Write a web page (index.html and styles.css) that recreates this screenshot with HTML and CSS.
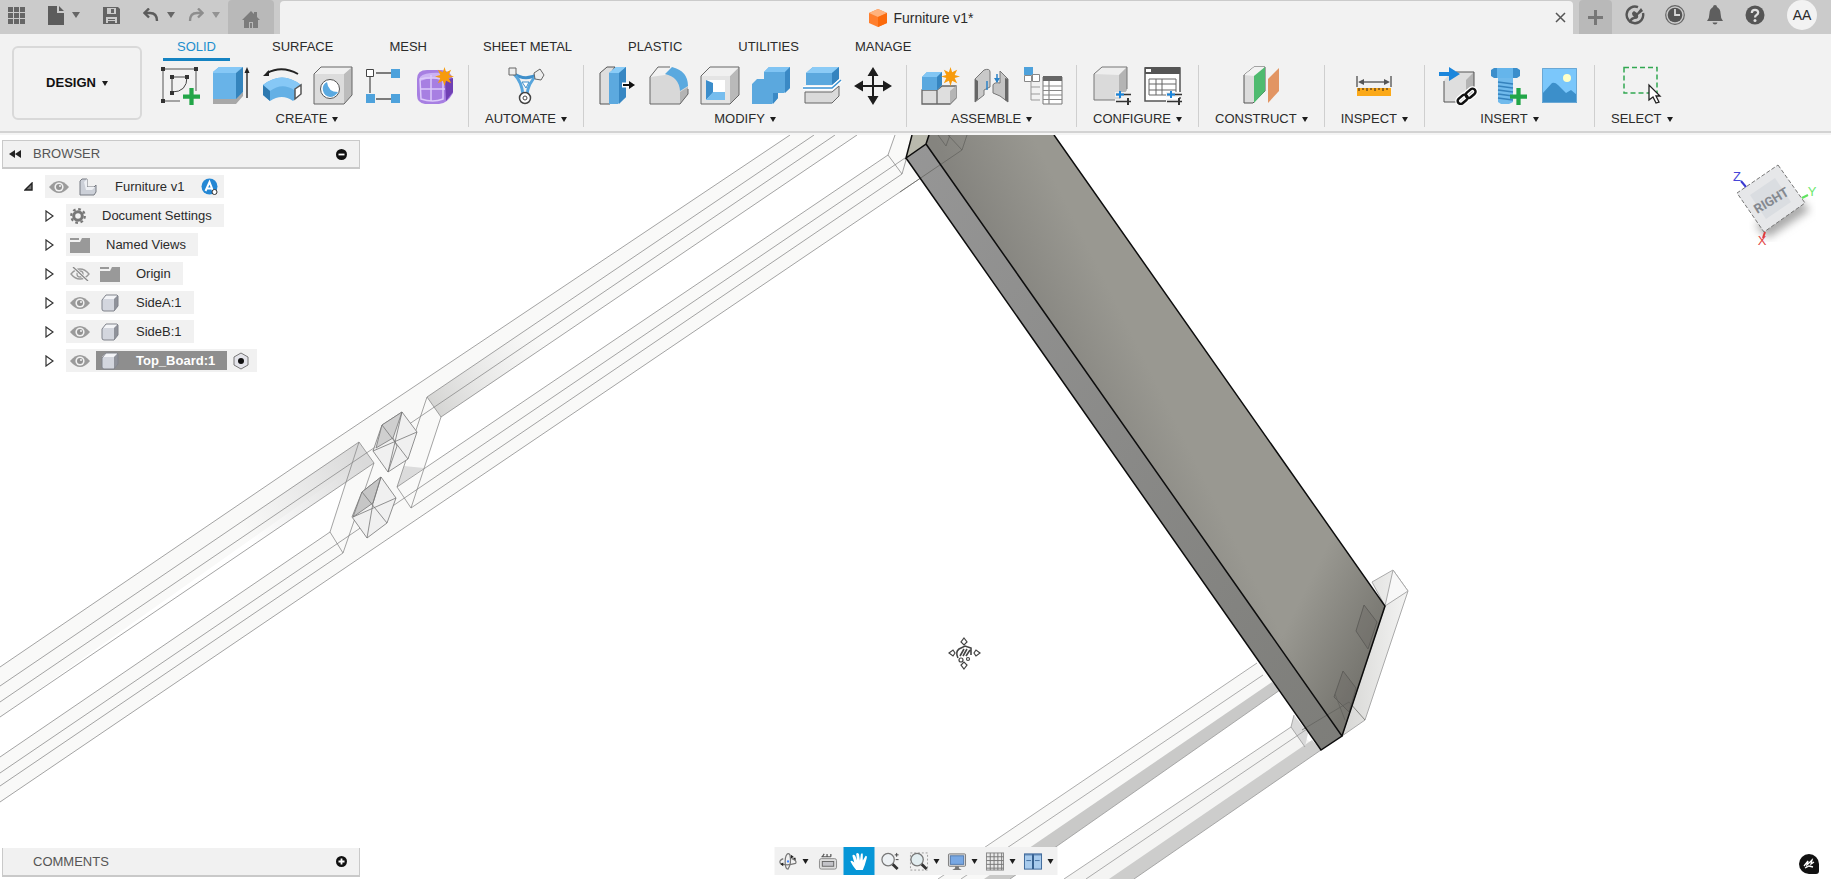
FILE: index.html
```
<!DOCTYPE html>
<html lang="en">
<head>
    <meta charset="UTF-8">
    <meta name="viewport" content="width=device-width, initial-scale=1.0">
    <link rel="stylesheet" href="styles.css">
    <title>Furniture v1*</title>
</head>
<body>

    <!-- Shared symbols -->
    <svg class="symbols" aria-hidden="true">
        <symbol id="eye" viewBox="0 0 20 14">
            <path d="M0 7 Q5 1 10 1 Q15 1 20 7 Q15 13 10 13 Q5 13 0 7Z" fill="#9b9b9b"/>
            <circle cx="10" cy="7" r="4.6" fill="#f1f1f1"/>
            <circle cx="10" cy="7" r="3" fill="#929292"/>
            <circle cx="11" cy="6" r="1" fill="#f1f1f1"/>
        </symbol>
        <symbol id="eye-off" viewBox="0 0 20 14">
            <path d="M1 7 Q5 2 10 2 Q15 2 19 7 Q15 12 10 12 Q5 12 1 7Z" fill="none" stroke="#999" stroke-width="1.3"/>
            <circle cx="10" cy="7" r="3" fill="none" stroke="#999" stroke-width="1.3"/>
            <path d="M3 0 L18 14" stroke="#f1f1f1" stroke-width="3"/>
            <path d="M3 0 L18 14" stroke="#888" stroke-width="1.3"/>
        </symbol>
        <symbol id="folder" viewBox="0 0 20 16">
            <path d="M0 1H9V3H0Z M0 5H10L12 1H20V16H0Z" fill="#999"/>
        </symbol>
        <symbol id="body" viewBox="0 0 18 18">
            <path d="M1 6 Q1 5 5 1 H16 Q17 1 17 3 V12 L13 17 H3 Q1 17 1 15Z" fill="#d3d6de"/>
            <path d="M1 5 L5 1 H17 L13 5Z" fill="#f3f4f7"/>
            <path d="M13 5 L17 1 V12 L13 17Z" fill="#8f929a"/>
            <path d="M1 6 L5 1 H16 L17 2 V12 L13 17 H3 Q1 17 1 15Z" fill="none" stroke="#80838b"/>
        </symbol>
        <symbol id="closed" viewBox="0 0 9 12">
            <path d="M1 1 L8 6 L1 11Z" fill="#fff" stroke="#333" stroke-width="1.2"/>
        </symbol>
        <symbol id="star" viewBox="0 0 20 20">
            <path d="M10 0 L11.7 5.6 L17 3 L14.4 8.3 L20 10 L14.4 11.7 L17 17 L11.7 14.4 L10 20 L8.3 14.4 L3 17 L5.6 11.7 L0 10 L5.6 8.3 L3 3 L8.3 5.6Z" fill="#f79b0c"/>
        </symbol>
        <symbol id="plus" viewBox="0 0 16 16">
            <path d="M6 0H10V6H16V10H10V16H6V10H0V6H6Z" fill="#22a648"/>
        </symbol>
    </svg>

    <header class="titlebar">
        <div class="quick">
            <button aria-label="Data panel"><svg width="17" height="17" viewBox="0 0 17 17"><path d="M0 0h5v5H0zM6 0h5v5H6zM12 0h5v5h-5zM0 6h5v5H0zM6 6h5v5H6zM12 6h5v5h-5zM0 12h5v5H0zM6 12h5v5H6zM12 12h5v5h-5z" fill="#666"/></svg></button>
            <button class="has-caret" aria-label="File"><svg width="16" height="19" viewBox="0 0 16 19"><path d="M0 0H9V7H16V19H0Z M11 0L16 5H11Z" fill="#5c5c5c"/></svg><i class="caret big"></i></button>
            <button aria-label="Save"><svg width="17" height="17" viewBox="0 0 17 17"><path d="M0 0H15L17 2V17H0Z" fill="#636363"/><path d="M4 1H13V7H4Z M3 10H14V16H3Z" fill="#cbcbcb"/><path d="M8 2H11V6H8Z M5 12H12V13H5Z M5 14H12V17H5Z" fill="#636363"/></svg></button>
            <button class="has-caret" aria-label="Undo"><svg width="16" height="14" viewBox="0 0 16 14"><path d="M2 5H7Q14 5 14 13" fill="none" stroke="#5c5c5c" stroke-width="2.4"/><path d="M6 0.5L1.5 5L6 9.5" fill="none" stroke="#5c5c5c" stroke-width="2.4"/></svg><i class="caret big"></i></button>
            <button class="has-caret faded" aria-label="Redo"><svg width="16" height="14" viewBox="0 0 16 14"><path d="M14 5H9Q2 5 2 13" fill="none" stroke="#5c5c5c" stroke-width="2.4"/><path d="M10 0.5L14.500 5L10 9.5" fill="none" stroke="#5c5c5c" stroke-width="2.4"/></svg><i class="caret big"></i></button>
        </div>
        <button class="home" aria-label="Home"><svg width="18" height="17" viewBox="0 0 18 17"><path d="M9 0L12 3V1H15V6L18 9H16V17H11V11H7V17H2V9H0Z" fill="#7c7c7c"/><path d="M8 12H10V17H8Z" fill="#7c7c7c"/></svg></button>
        <div class="doc">
            <div class="doc__name">
                <svg width="18" height="20" viewBox="0 0 18 20"><path d="M9 1L18 5V15L9 19L0 15V5Z" fill="#ff7f2e"/><path d="M9 1L18 5L9 9L0 5Z" fill="#ffb27d"/><path d="M9 9L18 5V15L9 19Z" fill="#fb6a0c"/></svg>
                <span>Furniture v1*</span>
            </div>
            <button aria-label="Close"><svg width="11" height="11" viewBox="0 0 11 11"><path d="M1 1L10 10M10 1L1 10" stroke="#555" stroke-width="1.5"/></svg></button>
        </div>
        <button class="new-tab" aria-label="New tab"><svg width="15" height="15" viewBox="0 0 15 15"><path d="M7.5 0V15M0 7.5H15" stroke="#777" stroke-width="3"/></svg></button>
        <div class="status">
            <button aria-label="Extensions"><svg width="20" height="20" viewBox="0 0 20 20"><path d="M13 2.200A8.300 8.300 0 1 0 18 8" fill="none" stroke="#555" stroke-width="2.4"/><path d="M4 17Q5 12 9 12Q5 8 9 6L12 8L16 3L18 6L13 10Q14 14 10 14Q8 14 5 18Z" fill="#555"/></svg></button>
            <button aria-label="Job status"><svg width="20" height="20" viewBox="0 0 20 20"><circle cx="10" cy="10" r="9.3" fill="none" stroke="#666" stroke-width="1.2"/><circle cx="10" cy="10" r="7.3" fill="#555"/><path d="M10 4V10H15" fill="none" stroke="#d8d8d8" stroke-width="1.8"/></svg></button>
            <button aria-label="Notifications"><svg width="20" height="20" viewBox="0 0 20 20"><path d="M10 0Q12 0 12 2Q15.5 4 15.5 8Q15.5 13 18 16H2Q4.5 13 4.5 8Q4.5 4 8 2Q8 0 10 0Z M7.5 17.5H12.5Q12 19.5 10 19.5Q8 19.5 7.5 17.5Z" fill="#5e5e5e"/></svg></button>
            <button aria-label="Help"><svg width="20" height="20" viewBox="0 0 20 20"><circle cx="10" cy="10" r="9.5" fill="#555"/><path d="M6.8 8Q6.8 4.800 10 4.800Q13.200 4.800 13.200 7.500Q13.200 9 11.500 10Q10 10.800 10 12.500" fill="none" stroke="#e0e0e0" stroke-width="2.2"/><circle cx="10" cy="15.5" r="1.5" fill="#e0e0e0"/></svg></button>
            <button class="avatar">AA</button>
        </div>
    </header>

    <div class="ribbon">
        <button class="workspace">DESIGN <i class="caret"></i></button>
        <div class="ribbon__body">
            <nav class="tabs">
                <a href="#" class="active">SOLID</a>
                <a href="#">SURFACE</a>
                <a href="#">MESH</a>
                <a href="#">SHEET METAL</a>
                <a href="#">PLASTIC</a>
                <a href="#">UTILITIES</a>
                <a href="#">MANAGE</a>
            </nav>
            <div class="groups">
                <div class="group">
                    <div class="tools">
                        <button aria-label="Create sketch"><svg viewBox="0 0 40 40">
                            <path d="M3 4H36V26M3 4V36H20" fill="none" stroke="#555"/>
                            <path d="M12 12H27Q27 27 12 27Z" fill="none" stroke="#444"/>
                            <path d="M1 2h4v4H1zM34 2h4v4h-4zM1 34h4v4H1zM10 10h4v4h-4zM25 10h4v4h-4zM10 26h4v4h-4z" fill="#333"/>
                            <use href="#plus" x="23" y="23" width="17" height="17"/></svg></button>
                        <button aria-label="Extrude"><svg viewBox="0 0 40 40">
                            <path d="M2 33H25L32 27V31L25 39H2Z" fill="#a8a8a8"/>
                            <path d="M2 7L8 2H32L25 8V34H2Z" fill="#68b3e8"/><path d="M2 7L8 2H32L25 8H2Z" fill="#86c8f6"/>
                            <path d="M25 8L32 2V27L25 34Z" fill="#3484bd"/>
                            <path d="M36 33V6" stroke="#333" stroke-width="1.5"/><path d="M36 2L33.5 8H38.5Z" fill="#222"/></svg></button>
                        <button aria-label="Revolve"><svg viewBox="0 0 40 40">
                            <path d="M1 20Q20 5 39 20V29L31 36Q20 28 8 36L1 30Z" fill="#64b0e5"/><path d="M1 20Q20 5 39 20L32 25Q20 17 8 26Z" fill="#86c8f6"/>
                            <path d="M1 20L8 26V36L1 30Z" fill="#2e79b0"/><path d="M33 24L39 20V29L33 34Z" fill="#fff" stroke="#555" stroke-width="1.5"/>
                            <path d="M5 8Q20 0 36 9" fill="none" stroke="#222" stroke-width="2"/><path d="M1 11L7 5V11Z" fill="#222"/></svg></button>
                        <button aria-label="Hole"><svg viewBox="0 0 40 40">
                            <path d="M1 9L8 2H39V30L31 39H1Z" fill="#dcdcdc"/><path d="M31 9L39 2V30L31 39Z" fill="#bcbcbc"/><path d="M1 9L8 2H39L31 9Z" fill="#f0f0f0"/>
                            <path d="M1 9L8 2H39V30L31 39H1Z" fill="none" stroke="#666"/>
                            <circle cx="17" cy="24" r="9.5" fill="#fff" stroke="#555"/><path d="M14 17Q15 27 25 27Q22 32 17 32A8 8 0 0 1 14 17Z" fill="#5aa9e0"/></svg></button>
                        <button aria-label="Pattern"><svg viewBox="0 0 40 40">
                            <path d="M12 8H28M6 12V28M12 34H28" stroke="#555" stroke-width="1.3" fill="none"/>
                            <path d="M2.5 4.5h7v7h-7z" fill="#fff" stroke="#444"/><path d="M27 4h9v9h-9zM2 29h9v9H2zM27 29h9v9h-9z" fill="#4ea2dc"/></svg></button>
                        <button aria-label="Create form"><svg viewBox="0 0 40 40">
                            <path d="M2 14Q2 5 12 5H26Q38 6 38 18V28Q32 39 24 39H10Q2 38 2 30Z" fill="#a77fe2"/>
                            <path d="M30 15L38 13V27L31 36Z" fill="#7040b4"/><path d="M5 12Q10 7 27 8L25 14Q15 12 5 16Z" fill="#ccb3f4"/>
                            <path d="M16 10V36M5 24H30M5 14Q18 11 28 15V34Q18 38 6 34Z" fill="none" stroke="#dccafa" stroke-width="1.5"/>
                            <use href="#star" x="20" y="2" width="19" height="19"/></svg></button>
                    </div>
                    <button class="label">CREATE <i class="caret"></i></button>
                </div>
                <div class="group">
                    <div class="tools">
                        <button aria-label="Automate"><svg viewBox="0 0 40 40">
                            <path d="M7 8Q19 17 32 9" fill="none" stroke="#3f8fca" stroke-width="3"/>
                            <path d="M8 9Q16 17 17 30M31 10Q22 18 21 30" fill="none" stroke="#57a5dc" stroke-width="3"/>
                            <path d="M16 17H23L20 23Z" fill="#fff" stroke="#3f8fca"/>
                            <path d="M3 3h7v7H3z" fill="#eee" stroke="#666"/><path d="M28 8L34 4L38 10L35 15L29 14Z" fill="#eee" stroke="#666"/>
                            <circle cx="19" cy="33" r="5.5" fill="#fff" stroke="#444" stroke-width="1.5"/><circle cx="19" cy="33" r="2" fill="none" stroke="#444"/></svg></button>
                    </div>
                    <button class="label">AUTOMATE <i class="caret"></i></button>
                </div>
                <div class="group">
                    <div class="tools">
                        <button aria-label="Press pull"><svg viewBox="0 0 40 40">
                            <path d="M2 8L9 2H17L12 9V39H2Z" fill="#dedede" stroke="#555"/>
                            <path d="M11 8L18 2H28V32L20 39H11Z" fill="#5ca9df"/><path d="M11 8L18 2H28L21 8Z" fill="#8accf7"/><path d="M21 8L28 2V32L21 39Z" fill="#3787c3"/>
                            <path d="M24 20H36" stroke="#fff" stroke-width="5"/><path d="M25 20H33" stroke="#111" stroke-width="2"/><path d="M31 16L37 20L31 24Z" fill="#111"/></svg></button>
                        <button aria-label="Fillet"><svg viewBox="0 0 40 40">
                            <path d="M1 12L9 2H21Q39 8 39 25V29L31 39H1Z" fill="#d8d8d8"/><path d="M1 12L9 2H24L16 10Z" fill="#f2f2f2"/><path d="M31 27L39 22V29L31 39Z" fill="#b4b4b4"/>
                            <path d="M1 12L9 2H21M39 24V29L31 39H1V12" fill="none" stroke="#666"/>
                            <path d="M16 9L23 2Q39 6 39 21L31 26Q30 12 16 9Z" fill="#5aa9df"/></svg></button>
                        <button aria-label="Shell"><svg viewBox="0 0 40 40">
                            <path d="M1 11L10 2H39V30L30 39H1Z" fill="#e4e4e4"/><path d="M30 11L39 2V30L30 39Z" fill="#b9b9b9"/><path d="M1 11L10 2H39L30 11Z" fill="#f0f0f0"/><path d="M1 11L10 2H39V30L30 39H1Z" fill="none" stroke="#666"/>
                            <path d="M6 15H25V35H6Z" fill="#fff"/><path d="M6 15L13 18V28L6 35Z" fill="#3b8dcb"/><path d="M6 35L13 27H25V35Z" fill="#76bdee"/></svg></button>
                        <button aria-label="Combine"><svg viewBox="0 0 40 40">
                            <path d="M1 19L6 14H13V7L18 2H39V23L33 28H27V33L21 39H1Z" fill="#5ba8de"/><path d="M13 7L18 2H39L34 7Z" fill="#80c4f3"/><path d="M34 7L39 2V23L34 28ZM22 28H27V33L22 39Z" fill="#3a89c5"/></svg></button>
                        <button aria-label="Split body"><svg viewBox="0 0 40 40">
                            <path d="M4 8L11 2H37V14L30 20H4Z" fill="#5ba8de"/><path d="M4 8L11 2H37L30 8Z" fill="#8bcbf6"/><path d="M30 8L37 2V14L30 20Z" fill="#3584bf"/>
                            <path d="M3 27H30L37 21V31L30 38H3Z" fill="#dadada" stroke="#666"/><path d="M1 23H30L39 15" fill="none" stroke="#fff" stroke-width="4"/><path d="M1 23H30L39 15" fill="none" stroke="#3c93d3" stroke-width="1.5"/></svg></button>
                        <button aria-label="Move"><svg viewBox="0 0 40 40">
                            <path d="M20 6V34M6 21H34" stroke="#1d1d1d" stroke-width="2"/><path d="M20 2L14.5 11H25.5ZM20 40L14.5 31H25.5ZM1 21L10 15.5V26.5ZM39 21L30 15.5V26.5Z" fill="#1d1d1d"/></svg></button>
                    </div>
                    <button class="label">MODIFY <i class="caret"></i></button>
                </div>
                <div class="group">
                    <div class="tools">
                        <button aria-label="New component"><svg viewBox="0 0 40 40">
                            <path d="M1 25H16V39H1ZM16 25L21 21H35V33L29 39H16Z" fill="#dedede" stroke="#666" stroke-width="1.3"/><path d="M29 26L35 21V33L29 39Z" fill="#b5b5b5"/>
                            <path d="M1 12L6 7H21V20L16 25H1Z" fill="#5aa8df"/><path d="M1 12L6 7H21L16 12Z" fill="#82c6f4"/><path d="M16 12L21 7V20L16 25Z" fill="#3685c0"/>
                            <use href="#star" x="20" y="2" width="19" height="19"/></svg></button>
                        <button aria-label="Joint"><svg viewBox="0 0 40 40">
                            <path d="M3 14L12 5Q18 3 18 7V22L12 25V30L3 37Z" fill="#c9c9c9" stroke="#777"/><path d="M21 20Q22 17 28 18V6L36 14V37L28 31L21 28Z" fill="#c5c5c5" stroke="#777"/>
                            <path d="M3 14L6 16V34L3 37ZM33 13L36 14V37L33 35Z" fill="#666"/><path d="M15 16V25M25 9V17" stroke="#2c83c8" stroke-width="1.5"/><path d="M22 13H28L25 18Z" fill="#2c83c8"/></svg></button>
                        <button aria-label="Bill of materials"><svg viewBox="0 0 40 40">
                            <path d="M1 2h9v8H1z" fill="#4ea2dc"/><path d="M1.5 10.5h7v6h-7zM9.5 9.5h7v7h-7z" fill="#fff" stroke="#888"/>
                            <path d="M8 17V35H17M8 22H17M8 29H17" fill="none" stroke="#999"/><path d="M20 12H39V39H20Z" fill="#fff" stroke="#777"/><path d="M20 11H39V16H20Z" fill="#666"/>
                            <path d="M20 21H39M20 25.5H39M20 30H39M20 34.5H39M26 16V39" stroke="#888" stroke-width="1.2"/></svg></button>
                    </div>
                    <button class="label">ASSEMBLE <i class="caret"></i></button>
                </div>
                <div class="group">
                    <div class="tools">
                        <button aria-label="Configure"><svg viewBox="0 0 40 40">
                            <path d="M2 9L10 2H35V25L27 35H2Z" fill="#dadada"/><path d="M2 9L10 2H35L27 10Z" fill="#eee"/><path d="M27 10L35 2V25L27 35Z" fill="#b4b4b4"/><path d="M35 24V2H10L2 9V35H23" fill="none" stroke="#777"/>
                            <path d="M23 29.5H40M23 36.5H40" stroke="#f1f1f1" stroke-width="5"/><path d="M24 29.5H39M24 36.5H39" stroke="#333" stroke-width="1.5"/><path d="M28 26V33M24 29.5H32" stroke="#1b86dc" stroke-width="2"/><path d="M36 33V40" stroke="#333" stroke-width="2"/></svg></button>
                        <button aria-label="Configuration table"><svg viewBox="0 0 40 40">
                            <path d="M2 3H37V36H2Z" fill="#fff" stroke="#555" stroke-width="1.5"/><path d="M2 2H37V9H2Z" fill="#555"/><path d="M3 4H8V7H3Z" fill="#fff"/>
                            <path d="M6 14H33V30H6ZM6 19H33M6 25H33M13 14V30M19 14V30" fill="none" stroke="#666"/>
                            <path d="M23 29.5H40M23 36.5H40" stroke="#f1f1f1" stroke-width="5"/><path d="M24 29.5H39M24 36.5H39" stroke="#333" stroke-width="1.5"/><path d="M28 26V33M24 29.5H32" stroke="#1b86dc" stroke-width="2"/><path d="M36 33V40" stroke="#333" stroke-width="2"/></svg></button>
                    </div>
                    <button class="label">CONFIGURE <i class="caret"></i></button>
                </div>
                <div class="group">
                    <div class="tools">
                        <button aria-label="Offset plane"><svg viewBox="0 0 40 40">
                            <path d="M3 10L13 2H24V26L12 38H3Z" fill="#dcdcdc" stroke="#555"/><path d="M3 10L13 2H24L13 11Z" fill="#f2f2f2"/><path d="M13 11L24 2V26L13 38Z" fill="#4fbb6f"/>
                            <path d="M27 14L38 3V26L27 38Z" fill="#e29563"/></svg></button>
                    </div>
                    <button class="label">CONSTRUCT <i class="caret"></i></button>
                </div>
                <div class="group">
                    <div class="tools">
                        <button aria-label="Measure"><svg viewBox="0 0 40 40">
                            <path d="M3 11V22M37 11V22M7 17H33" stroke="#666" stroke-width="1.5"/><path d="M4 17L10 14V20ZM36 17L30 14V20Z" fill="#555"/>
                            <path d="M3 23H37V31H3Z" fill="#fba919"/><path d="M5 23v3M9 23v2M13 23v3M17 23v2M21 23v3M25 23v2M29 23v3M33 23v2" stroke="#75501a" stroke-width="1.5"/></svg></button>
                    </div>
                    <button class="label">INSPECT <i class="caret"></i></button>
                </div>
                <div class="group">
                    <div class="tools">
                        <button aria-label="Insert derive"><svg viewBox="0 0 40 40">
                            <path d="M6 15L14 7H36V30L28 37H6Z" fill="#dedede"/><path d="M28 15L36 7V30L28 37Z" fill="#b4b4b4"/><path d="M36 24V7H18M6 16V37H18" fill="none" stroke="#555"/>
                            <path d="M1 7H11V2L22 9L11 16V11H1Z" fill="#1b86dc"/>
                            <g fill="none" stroke="#fff" stroke-width="5"><rect x="19" y="31" width="11" height="6" rx="3" transform="rotate(-40 25 34)"/><rect x="27" y="25" width="11" height="6" rx="3" transform="rotate(-40 33 28)"/></g>
                            <g fill="none" stroke="#111" stroke-width="2.5"><rect x="19" y="31" width="11" height="6" rx="3" transform="rotate(-40 25 34)"/><rect x="27" y="25" width="11" height="6" rx="3" transform="rotate(-40 33 28)"/></g></svg></button>
                        <button aria-label="Insert fastener"><svg viewBox="0 0 40 40">
                            <path d="M2 5L5 3H28L31 5V11L28 13H5L2 11Z" fill="#3b8ecb"/><path d="M8 3H24V13H8Z" fill="#65b5eb"/>
                            <path d="M9 13H24V37L20 39H12L9 37Z" fill="#70baec"/><path d="M9 17L24 19M9 21L24 23M9 25L24 27M9 29L24 31M9 33L24 35" stroke="#3582bd" stroke-width="1.5"/>
                            <use href="#plus" x="21" y="23" width="17" height="17"/></svg></button>
                        <button aria-label="Insert canvas"><svg viewBox="0 0 40 40">
                            <path d="M2 3H37V38H2Z" fill="#7bc7fb"/><path d="M2 29L12 18Q15 17 18 20L26 28L31 25L37 30V38H2Z" fill="#3c8fca"/><circle cx="27" cy="13" r="4" fill="#ffffc8"/><path d="M2.5 3.5H36.5V37.5H2.5Z" fill="none" stroke="#6aa8d5"/></svg></button>
                    </div>
                    <button class="label">INSERT <i class="caret"></i></button>
                </div>
                <div class="group">
                    <div class="tools">
                        <button aria-label="Select"><svg viewBox="0 0 40 40">
                            <path d="M2 2.500H35V28H2Z" fill="none" stroke="#32a852" stroke-width="1.5" stroke-dasharray="5 3"/>
                            <path d="M27 20V35L31 32L34 38L37 37L34 31H38Z" fill="#fff" stroke="#222" stroke-width="1.3"/></svg></button>
                    </div>
                    <button class="label">SELECT <i class="caret"></i></button>
                </div>
            </div>
        </div>
    </div>

    <main class="canvas">
        <!-- 3D model -->
        <svg class="model" viewBox="0 135 1831 744" preserveAspectRatio="xMidYMid slice">
            <defs>
                <linearGradient id="board" gradientUnits="userSpaceOnUse" x1="960" y1="190" x2="1040" y2="150">
                    <stop offset="0" stop-color="#85847f"/><stop offset="1" stop-color="#999891"/>
                </linearGradient>
                <linearGradient id="boardEnd" gradientUnits="userSpaceOnUse" x1="1290" y1="620" x2="1370" y2="660">
                    <stop offset="0" stop-color="#777670" stop-opacity="0"/><stop offset="1" stop-color="#777670"/>
                </linearGradient>
                <linearGradient id="edge" x1="0" y1="0" x2="1" y2="1">
                    <stop offset="0" stop-color="#969696"/><stop offset="1" stop-color="#7d7d79"/>
                </linearGradient>
                <linearGradient id="fadeL" gradientUnits="userSpaceOnUse" x1="240" y1="530" x2="355" y2="450">
                    <stop offset="0" stop-color="#dedede" stop-opacity="0"/><stop offset="1" stop-color="#dadada"/>
                </linearGradient>
                <linearGradient id="fadeR" gradientUnits="userSpaceOnUse" x1="430" y1="410" x2="540" y2="335">
                    <stop offset="0" stop-color="#d3d3d1"/><stop offset="1" stop-color="#e4e4e4" stop-opacity="0"/>
                </linearGradient>
                <linearGradient id="plate" x1="0" y1="0" x2="1" y2="0">
                    <stop offset="0" stop-color="#d6d6d4"/><stop offset="1" stop-color="#f3f3f2"/>
                </linearGradient>
            </defs>

            <!-- left side frame -->
            <g fill="#f9f9f8">
                <path d="M0 667L300 463L790 135H857L441 417L359 463L0 717Z"/>
                <path d="M0 757L330 532L397 487L888 155L895 135H967L962 150L342 570L0 802Z"/>
                <path d="M300 463L445 366L441 417L411 508L343 570L330 532L359 442Z"/>
            </g>
            <path d="M200 549L359 442L374 463L200 581Z" fill="url(#fadeL)"/>
            <path d="M427 397L560 307L590 317L441 417Z" fill="url(#fadeR)"/>
            <path d="M397 487L404 466L424 468Z" fill="#dcdcdc"/>
            <g fill="none" stroke="#858585" stroke-opacity=".75">
                <path d="M0 667L300 463L790 135M0 686L359 442L374 463L0 717M0 702L300 498L489 370L835 135"/>
                <path d="M814 135L427 397L441 417L857 135M427 397L397 487L411 508L441 417"/>
                <path d="M0 757L330 532L343 553L0 786M359 442L330 532M374 463L343 553M0 773L300 569L500 433L905 158"/>
                <path d="M397 487L888 155L902 174L411 508M0 802L342 570L962 150L967 135M888 155L895 135M902 174L906 160"/>
            </g>
            <g stroke="#777" stroke-opacity=".8">
                <path d="M402 412L417 432L408 459L388 472L373 451L382 425Z" fill="#f0f0f0"/>
                <path d="M382 425L402 412L393 438L376 448Z" fill="#cfcfcf"/>
                <path d="M382 425L408 459M402 412L388 472M373 451L417 432M393 438L397 446L388 472" fill="none"/>
                <path d="M381 477L396 498L387 523L367 538L352 517L362 492Z" fill="#f0f0f0"/>
                <path d="M362 492L381 477L373 503L353 517Z" fill="#c6c6c6"/>
                <path d="M362 492L387 523M373 503L367 538M353 517L396 498M381 477L373 503" fill="none"/>
            </g>

            <!-- right side frame -->
            <path d="M938 879L1257 663L1280 690L1010 879Z" fill="#f8f8f7"/>
            <path d="M984 879L1272 682L1280 690L1010 879Z" fill="#c9c9c8"/>
            <path d="M1064 879L1291 727L1305 738L1321 750L1134 879Z" fill="#f4f4f3"/>
            <path d="M1109 879L1312 740L1321 750L1134 879Z" fill="#cdcdcc"/>
            <path d="M1291 727L1294 715L1308 733L1305 747Z" fill="#d9d9d9"/>
            <path d="M938 879L1257 663M961 879L1263 675M1010 879L1280 690M1064 879L1291 727L1305 747M1086 879L1310 727M1134 879L1321 750M1294 715L1291 727" fill="none" stroke="#999" stroke-opacity=".8"/>
            <path d="M1393 570L1408 591L1365 720L1342 736L1385 606L1372 582Z" fill="url(#plate)" stroke="#aaa"/>
            <path d="M1385 606L1393 570L1408 591Z" fill="#f8f8f8" stroke="#aaa"/>

            <!-- top board -->
            <path d="M906 158L912 135H929L926 144Z" fill="#b9b9ad"/>
            <path d="M926 144L929 135H1054L1385 606L1342 736Z" fill="url(#board)"/>
            <path d="M926 144L929 135H1054L1385 606L1342 736Z" fill="url(#boardEnd)"/>
            <path d="M906 158L926 144L1342 736L1321 750Z" fill="url(#edge)"/>
            <path d="M1364 605L1377 622L1368 649L1356 631ZM1343 671L1356 688L1349 712L1334 697Z" fill="#666560" fill-opacity=".3" stroke="#5f5e5a"/>
            <path d="M938 135L946 146L950 135M948 135L962 150M900 192L962 150L967 135M1302 730L1349 702L1365 720M1335 694L1345 720" fill="none" stroke="#5f5f5b" stroke-opacity=".7"/>
            <path d="M912 135L906 158L926 144L929 135M906 158L1321 750L1342 736L926 144M1054 135L1385 606L1342 736" fill="none" stroke="#0d0d0d" stroke-width="1.5"/>

            <!-- pan cursor -->
            <g fill="#fff" stroke="#444" stroke-width="1.2">
                <path d="M964 638L967 642L964 645L961 642ZM964 669L967 665L964 662L961 665ZM949 653L953 650L955 653L953 656ZM980 653L976 650L974 653L976 656Z"/>
                <path d="M958 658Q955 652 959 649L965 646L971 648V655M960 656L964 649M963 656L967 649M966 656L970 650" fill="none" stroke-width="1.6"/>
                <circle cx="961" cy="660" r="2"/><circle cx="968" cy="659" r="1.500"/>
            </g>
        </svg>

        <aside class="browser">
            <div class="panel">
                <svg width="12" height="8" viewBox="0 0 12 8"><path d="M6 0V8L0 4ZM12 0V8L6 4Z" fill="#222"/></svg>
                <span>BROWSER</span>
                <button aria-label="Collapse"><svg width="11" height="11" viewBox="0 0 11 11"><circle cx="5.5" cy="5.5" r="5.5" fill="#111"/><path d="M2.5 5.5H8.5" stroke="#fff" stroke-width="1.8"/></svg></button>
            </div>
            <ul class="tree">
                <li class="root">
                    <svg width="9" height="9" viewBox="0 0 9 9"><path d="M8 1V8H1Z" fill="#777" stroke="#222" stroke-width="1.4"/></svg>
                    <div class="node">
                        <svg width="20" height="14"><use href="#eye"/></svg>
                        <svg class="second" width="18" height="18" viewBox="0 0 18 18"><path d="M1 3L3 1H8V9H15L17 7V14L15 17H1Z" fill="#ccd0d8" stroke="#777a82"/><path d="M8 9H16L13 12H7L5 4L8 1Z" fill="#eef0f4"/></svg>
                        <span>Furniture v1</span>
                        <svg class="badge" width="18" height="18" viewBox="0 0 18 18"><circle cx="8.5" cy="8.5" r="8" fill="#2487d4"/><path d="M4.5 13L8.5 4L12 13M6 10.5H11" fill="none" stroke="#fff" stroke-width="2"/><circle cx="13.5" cy="14" r="2.5" fill="#fff" stroke="#333"/></svg>
                    </div>
                </li>
                <li>
                    <svg width="9" height="12"><use href="#closed"/></svg>
                    <div class="node">
                        <svg width="16" height="16" viewBox="0 0 16 16"><circle cx="8" cy="8" r="4.3" fill="none" stroke="#777" stroke-width="3"/><circle cx="8" cy="8" r="6.8" fill="none" stroke="#777" stroke-width="2.2" stroke-dasharray="2.7 2.64"/></svg>
                        <span>Document Settings</span>
                    </div>
                </li>
                <li>
                    <svg width="9" height="12"><use href="#closed"/></svg>
                    <div class="node">
                        <svg width="20" height="16"><use href="#folder"/></svg>
                        <span>Named Views</span>
                    </div>
                </li>
                <li>
                    <svg width="9" height="12"><use href="#closed"/></svg>
                    <div class="node">
                        <svg width="20" height="14"><use href="#eye-off"/></svg>
                        <svg class="second" width="20" height="16"><use href="#folder"/></svg>
                        <span>Origin</span>
                    </div>
                </li>
                <li>
                    <svg width="9" height="12"><use href="#closed"/></svg>
                    <div class="node">
                        <svg width="20" height="14"><use href="#eye"/></svg>
                        <svg class="second" width="20" height="18"><use href="#body"/></svg>
                        <span>SideA:1</span>
                    </div>
                </li>
                <li>
                    <svg width="9" height="12"><use href="#closed"/></svg>
                    <div class="node">
                        <svg width="20" height="14"><use href="#eye"/></svg>
                        <svg class="second" width="20" height="18"><use href="#body"/></svg>
                        <span>SideB:1</span>
                    </div>
                </li>
                <li>
                    <svg width="9" height="12"><use href="#closed"/></svg>
                    <div class="node">
                        <svg width="20" height="14"><use href="#eye"/></svg>
                        <div class="selected">
                            <svg width="20" height="18"><use href="#body"/></svg>
                            <span>Top_Board:1</span>
                        </div>
                        <svg class="radio" width="18" height="18" viewBox="0 0 18 18"><path d="M9 1L16 5V13L9 17L2 13V5Z" fill="#e4e4ea" stroke="#777"/><circle cx="9" cy="9" r="3" fill="#111"/></svg>
                    </div>
                </li>
            </ul>
        </aside>

        <svg class="viewcube" width="84" height="90" viewBox="1735 165 84 90">
            <defs><filter id="soft"><feGaussianBlur stdDeviation="4"/></filter></defs>
            <path d="M1768 238L1810 210L1800 200L1755 225Z" fill="#aaa" filter="url(#soft)"/>
            <path d="M1778 165L1805 203L1764 232L1737 193Z" fill="#e6e7e9" stroke="#777" stroke-dasharray="4 2"/>
            <path d="M1775 178L1791 202L1766 219L1750 195Z" fill="#dadde1"/>
            <path d="M1741 181L1746 187" stroke="#3a3ad0" stroke-width="2"/><path d="M1802 198L1808 195" stroke="#5fe45f" stroke-width="2"/><path d="M1765 232L1763 238" stroke="#e03a3a" stroke-width="2"/>
            <text x="1771" y="205" transform="rotate(-31 1771 200)" class="face">RIGHT</text>
            <text x="1737" y="181" fill="#4646d8">Z</text>
            <text x="1812" y="196" fill="#6ee86e">Y</text>
            <text x="1762" y="245" fill="#e24444">X</text>
        </svg>

        <div class="panel comments">
            <span>COMMENTS</span>
            <button aria-label="Add comment"><svg width="11" height="11" viewBox="0 0 11 11"><circle cx="5.5" cy="5.5" r="5.5" fill="#111"/><path d="M2.5 5.5H8.5M5.5 2.5V8.5" stroke="#fff" stroke-width="1.8"/></svg></button>
        </div>

        <div class="navbar">
            <button class="wide" aria-label="Orbit"><svg viewBox="0 0 20 20"><path d="M8 4Q10 0 12 3Q14 12 10 18Q7 18 7 10Q7 6 8 4Z" fill="none" stroke="#777" stroke-width="1.3"/><path d="M5 7Q0 9 2 12Q8 15 18 12Q20 9 14 7" fill="none" stroke="#777" stroke-width="1.3"/><path d="M13 3l3 2-3 2zM2 13l3-2v4zM15 6h3v3z" fill="#222"/><circle cx="10" cy="10" r="1.2" fill="#48f"/></svg><i class="caret"></i></button>
            <button aria-label="Look at"><svg viewBox="0 0 20 20"><rect x="1" y="7" width="18" height="11" rx="2" fill="#ddd" stroke="#888"/><rect x="4" y="10" width="12" height="5" fill="#c3c3c8" stroke="#666"/><path d="M3 5H13M6 2L4 5M9 2V5M13 2V5" stroke="#555" stroke-width="1.3"/></svg></button>
            <button class="on" aria-label="Pan"><svg viewBox="0 0 20 20"><path d="M7 19Q3 14 1 10Q2 8 5 11L3 4Q4 2 6 4L8 9L7 2Q8 0 10 2L11 9L12 2Q14 0 14 3V9L17 4Q19 4 18 7L16 14L14 19Z" fill="#fff"/></svg></button>
            <button aria-label="Zoom"><svg viewBox="0 0 20 20"><path d="M12 12L18 18" stroke="#333" stroke-width="3"/><circle cx="8" cy="8" r="6.5" fill="#edf1f4" stroke="#777" stroke-width="1.3"/><path d="M17 1V5M15 3H19M16 8H19" stroke="#444"/></svg></button>
            <button class="wide" aria-label="Fit"><svg viewBox="0 0 20 20"><path d="M1 1H19V19H1Z" fill="none" stroke="#999" stroke-dasharray="2 2"/><path d="M12 12L18 18" stroke="#333" stroke-width="3"/><circle cx="8" cy="8" r="6.5" fill="#e2edf0" stroke="#777" stroke-width="1.3"/></svg><i class="caret"></i></button>
            <button class="wide" aria-label="Display settings"><svg viewBox="0 0 20 20"><rect x="1" y="2" width="18" height="13" rx="1" fill="#ddd" stroke="#777"/><rect x="3" y="4" width="14" height="9" fill="#78a8e4" stroke="#5279ad"/><path d="M8 15H12V17L15 19H5L8 17Z" fill="#777"/></svg><i class="caret"></i></button>
            <button class="wide" aria-label="Grid"><svg viewBox="0 0 20 20"><rect x="1" y="1" width="18" height="18" fill="#e9e9e9" stroke="#888"/><path d="M5 1V19M9 1V19M13 1V19M17 1V19M1 5H19M1 9H19M1 13H19M1 17H19" stroke="#777"/></svg><i class="caret"></i></button>
            <button class="wide" aria-label="Viewports"><svg viewBox="0 0 20 20"><rect x="1" y="2" width="18" height="16" fill="#a8cbed" stroke="#3a6598"/><path d="M10 2V18" stroke="#315b8b" stroke-width="2"/><path d="M1 3H19M3 9H8M12 9H17" stroke="#456f9f"/></svg><i class="caret"></i></button>
        </div>

        <button class="assistant" aria-label="Assistant"><svg width="20" height="20" viewBox="0 0 20 20"><path d="M10 0A10 10 0 0 1 20 10V17Q20 20 17 20H10A10 10 0 0 1 10 0Z" fill="#111"/><path d="M5 12L9 7L8 11L13 6L12 10L15 8M6 14L10 12L14 13" fill="none" stroke="#fff" stroke-width="1.3"/></svg></button>
    </main>
</body>
</html>
```
FILE: styles.css
```
*{box-sizing: border-box;}

html, body{height: 100%;}
body{margin: 0; display: flex; flex-direction: column; overflow: hidden; font: 13px/16px "Liberation Sans", Arial, sans-serif; color: #2b2b2b; background: #fff;}
button{display: flex; align-items: center; justify-content: center; padding: 0; border: 0; background: none; font: inherit; color: inherit; cursor: pointer;}
svg{display: block; flex: none;}
.symbols{position: absolute; width: 0; height: 0;}
.caret{flex: none; border: 3px solid transparent; border-top: 5px solid #1d1d1d; border-bottom: 0;}
.caret.big{border-width: 6px 4px 0; border-top-color: #666;}

/* Title bar */
.titlebar{display: flex; height: 34px; flex: none; background: #cbcbcb;}
.quick{display: flex; align-items: center; gap: 23px; padding: 0 8px 4px; width: 228px;}
.has-caret{gap: 8px;}
.faded{margin-left: -10px; opacity: .55;}
.home{width: 46px; padding-top: 4px; background: #b9b9b9; border-radius: 4px 4px 0 0;}
.doc{flex: 1; display: flex; align-items: center; margin: 1px 6px 0; padding: 0 7px 0 8px; background: #f2f2f2; border-radius: 4px 4px 0 0; font-size: 14px;}
.doc__name{flex: 1; display: flex; align-items: center; justify-content: center; gap: 6px;}
.new-tab{width: 33px; background: #b9b9b9; border-radius: 4px 4px 0 0;}
.status{display: flex; align-items: center; gap: 20px; padding: 0 14px 4px 13px;}
.avatar{width: 30px; height: 30px; margin-left: 2px; border-radius: 50%; background: #f2f2f2; font-size: 14px;}

/* Ribbon */
.ribbon{display: flex; flex: none; padding-bottom: 4px; background: #f2f2f2; border-bottom: 2px solid #d3d3d3;}
.workspace{width: 130px; height: 74px; margin: 12px 4px 0 12px; gap: 6px; border: 2px solid #d9d9d9; border-radius: 6px; font-weight: bold; color: #111;}
.tabs{display: flex; gap: 28px; margin-left: 17px;}
.tabs a{height: 27px; padding: 5px 14px 0; color: inherit; text-decoration: none; border-bottom: 3px solid transparent;}
.tabs .active{color: #1d8fce; border-color: #1583c2;}
.groups{display: flex; margin-top: 4px;}
.group{display: flex; flex-direction: column; align-items: center; gap: 6px; padding: 0 8px; border-right: 1px solid #cfcfcf;}
.group:last-child{border: 0;}
.tools{display: flex;}
.tools button{width: 51px;}
.tools svg{width: 40px; height: 40px;}
.label{gap: 5px; padding: 0 8px;}

/* Canvas */
.canvas{flex: 1; position: relative; min-height: 0; border-top: 2px solid #f5f5f5; background: #fff; overflow: hidden;}
.model{position: absolute; inset: 0; width: 100%; height: 100%;}

.browser{position: absolute; top: 5px; left: 2px; width: 358px;}
.panel{display: flex; align-items: center; height: 29px; padding: 0 12px 0 6px; gap: 12px; background: #f1f1f1; border: 1px solid #c9c9c9; border-bottom-width: 2px; color: #555;}
.panel button{margin-left: auto;}
.comments{position: absolute; left: 2px; bottom: 2px; width: 358px; padding-left: 30px; border-top: 0;}

.tree{list-style: none; margin: 6px 0 0; padding: 0;}
.tree li{display: flex; align-items: center; gap: 12px; height: 23px; margin-bottom: 6px; padding-left: 43px;}
.tree .root{padding-left: 22px;}
.node{display: flex; align-items: center; height: 23px; padding: 0 12px 0 4px; background: #f1f1f1;}
.node span{margin-left: 16px;}
.root span{margin-left: 18px;}
.node .second{margin-left: 10px;}
.node .badge{margin: 0 -7px 0 17px;}
.selected{display: flex; align-items: center; height: 19px; margin-left: 6px; padding: 0 12px 0 4px; background: #8e8e8e; color: #fff; font-weight: bold;}
.radio{margin: 0 -5px 0 5px;}

.viewcube{position: absolute; top: 30px; right: 12px; overflow: visible;}
.viewcube text{font: 13px "Liberation Sans", Arial, sans-serif; text-anchor: middle;}
.viewcube .face{font: bold 13px Roboto, sans-serif; fill: #858990;}

.navbar{position: absolute; bottom: 4px; left: 50%; display: flex; height: 28px; transform: translateX(-50%); background: #f1f1f1;}
.navbar button{width: 31px;}
.navbar .wide{width: 38px; gap: 5px;}
.navbar .on{background: #0696d7;}
.navbar svg{width: 19px; height: 19px;}

.assistant{position: absolute; right: 12px; bottom: 5px;}
```
